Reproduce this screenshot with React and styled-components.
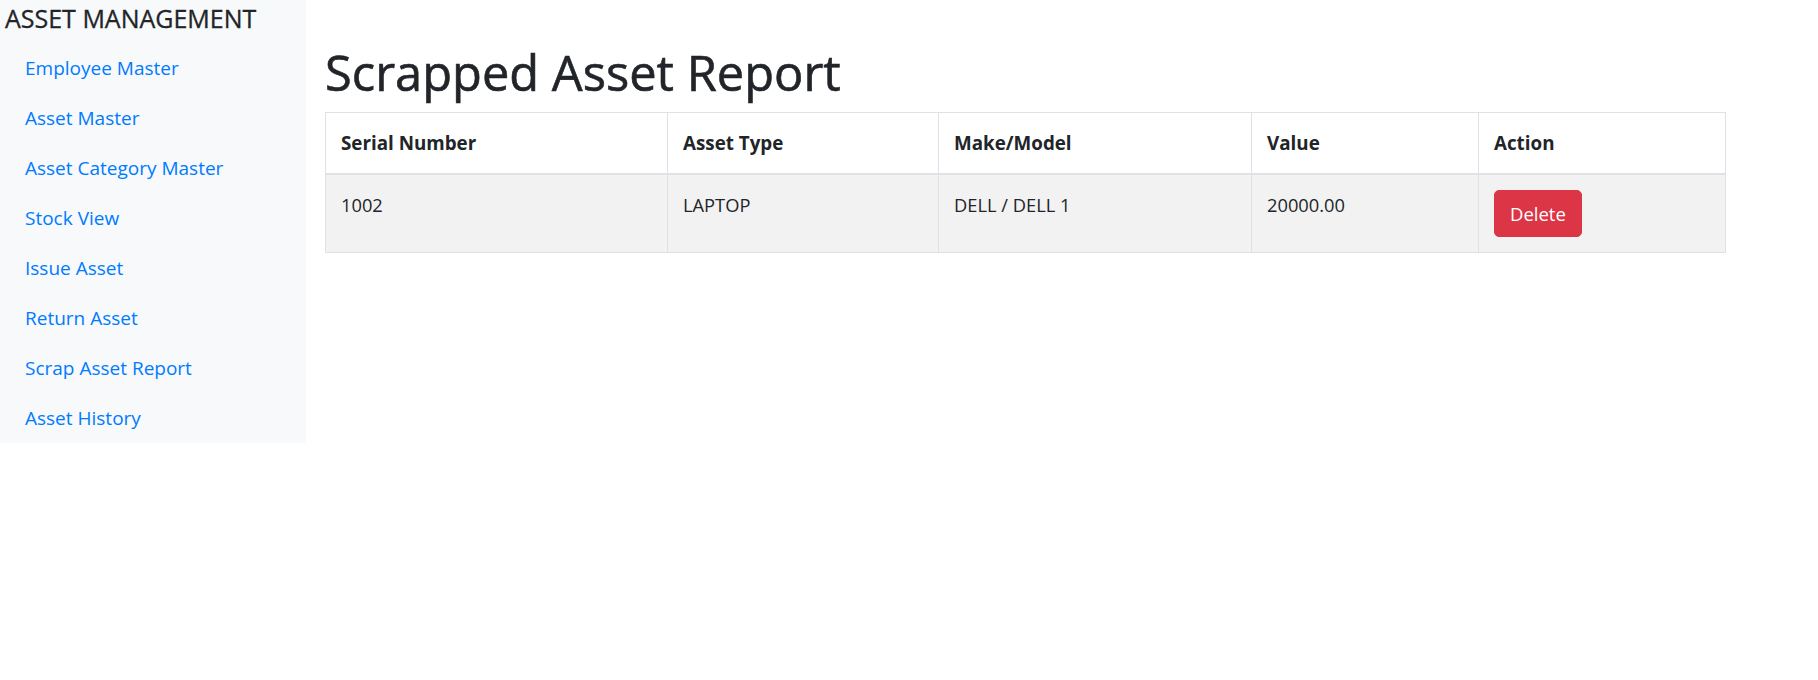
import React from "react";
import styled, { createGlobalStyle } from "styled-components";

const Global = createGlobalStyle`
  * { box-sizing: border-box; }
  body {
    margin: 0;
    font-family: "Open Sans", "Noto Sans", "Liberation Sans", sans-serif;
    color: #212529;
    background: #fff;
    font-size: 20px;
    line-height: 1.5;
  }
`;

const Page = styled.div`
  display: flex;
  align-items: flex-start;
`;

const Sidebar = styled.nav`
  width: 306px;
  flex: 0 0 306px;
  background: #f8f9fa;
  padding: 0 5px 0 5px;
`;

const Brand = styled.h4`
  margin: 0;
  height: 43px;
  font-size: 25px;
  font-weight: 500;
  line-height: 36px;
  color: #212529;
  white-space: nowrap;
  -webkit-text-stroke: 0.3px #212529;
`;

const NavList = styled.ul`
  list-style: none;
  margin: 0;
  padding: 0;
`;

const NavLink = styled.a`
  display: block;
  padding: 10px 20px;
  line-height: 30px;
  font-size: 19px;
  color: #007bff;
  text-decoration: none;
  white-space: nowrap;
`;

const Main = styled.main`
  padding: 42px 0 0 19px;
`;

const Title = styled.h1`
  margin: 0 0 10px;
  font-size: 48.8px;
  font-weight: 500;
  line-height: 60px;
  color: #212529;
  white-space: nowrap;
  -webkit-text-stroke: 0.6px #212529;
`;

const Table = styled.table`
  width: 1401px;
  table-layout: fixed;
  border-collapse: collapse;
  font-size: 18.3px;
`;

const Th = styled.th`
  text-align: left;
  font-weight: 700;
  font-size: 18.8px;
  padding: 15px;
  line-height: 30px;
  border: 1px solid #dee2e6;
  border-bottom: 2px solid #dee2e6;
  vertical-align: bottom;
  width: ${(p) => (p.$w ? `${p.$w}px` : "auto")};
`;

const Row = styled.tr`
  background: ${(p) => (p.$striped ? "#f2f2f2" : "#fff")};
`;

const Td = styled.td`
  padding: 15px;
  line-height: 30px;
  border: 1px solid #dee2e6;
  vertical-align: top;
`;

const DangerButton = styled.button`
  font-family: inherit;
  font-size: 18.5px;
  line-height: 30px;
  padding: 7.5px 15px;
  color: #fff;
  background: #dc3545;
  border: 1px solid #dc3545;
  border-radius: 5px;
  cursor: pointer;
`;

const links = [
  "Employee Master",
  "Asset Master",
  "Asset Category Master",
  "Stock View",
  "Issue Asset",
  "Return Asset",
  "Scrap Asset Report",
  "Asset History",
];

const columns = [
  { label: "Serial Number", w: 342 },
  { label: "Asset Type", w: 271 },
  { label: "Make/Model", w: 313 },
  { label: "Value", w: 227 },
  { label: "Action" },
];

const rows = [{ serial: "1002", type: "LAPTOP", model: "DELL / DELL 1", value: "20000.00" }];

export default function App() {
  return (
    <>
      <Global />
      <Page>
        <Sidebar>
          <Brand>ASSET MANAGEMENT</Brand>
          <NavList>
            {links.map((l) => (
              <li key={l}>
                <NavLink href="#">{l}</NavLink>
              </li>
            ))}
          </NavList>
        </Sidebar>
        <Main>
          <Title>Scrapped Asset Report</Title>
          <Table>
            <thead>
              <tr>
                {columns.map((c) => (
                  <Th key={c.label} $w={c.w}>
                    {c.label}
                  </Th>
                ))}
              </tr>
            </thead>
            <tbody>
              {rows.map((r, i) => (
                <Row key={r.serial} $striped={i % 2 === 0}>
                  <Td>{r.serial}</Td>
                  <Td>{r.type}</Td>
                  <Td>{r.model}</Td>
                  <Td>{r.value}</Td>
                  <Td>
                    <DangerButton>Delete</DangerButton>
                  </Td>
                </Row>
              ))}
            </tbody>
          </Table>
        </Main>
      </Page>
    </>
  );
}
